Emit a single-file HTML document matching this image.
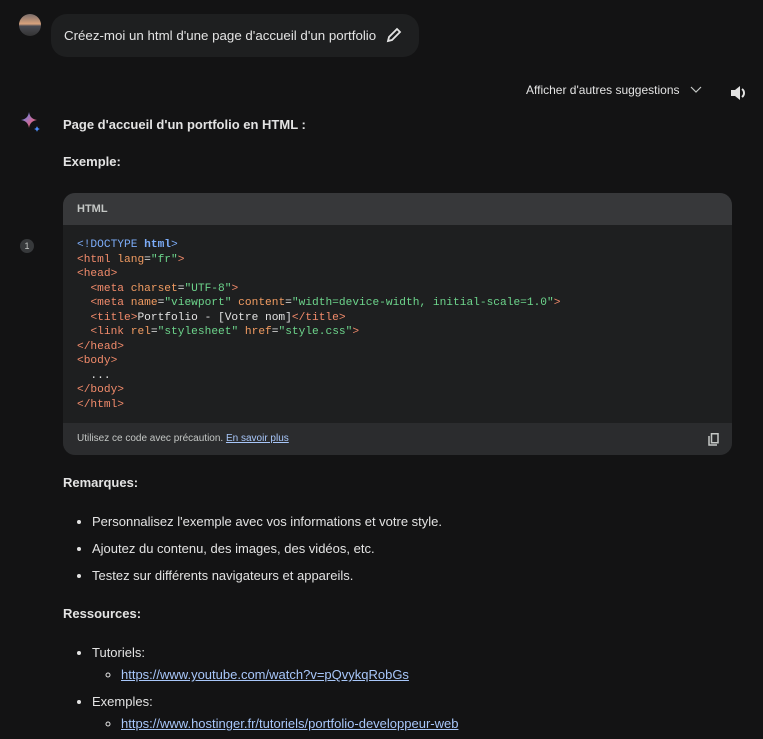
<!DOCTYPE html>
<html><head><style>
body{margin:0;background:#131314;color:#e3e3e3;font-family:"Liberation Sans",sans-serif;font-size:13px;width:763px;height:739px;overflow:hidden;position:relative}
.a{position:absolute}
.code{font-family:"Liberation Mono",monospace;font-size:11.2px;line-height:14.5px;white-space:pre;color:#e3e3e3}
.t{color:#f28b6b}.k{color:#7cacf8}.s{color:#6dd58c}.at{color:#f29c62}
li{margin:0}
a{color:#a8c7fa}
</style></head><body>
<div class="a" style="left:19px;top:14px;width:22px;height:22px;border-radius:50%;background:linear-gradient(#7a6d6a,#d9a27d 45%,#4a4a52 55%,#333)"></div>
<div class="a" style="left:51px;top:14px;width:368px;height:43px;border-radius:16px;background:#1e1f20"></div>
<div class="a" style="left:64px;top:28px;font-size:13.3px">Créez-moi un html d'une page d'accueil d'un portfolio</div>
<svg class="a" style="left:386px;top:27px" width="16" height="16" viewBox="0 0 16 16"><path d="M2 14l1-4 8-8 3 3-8 8z" fill="none" stroke="#e3e3e3" stroke-width="1.8"/></svg>
<div class="a" style="left:526px;top:83px;font-size:12px">Afficher d'autres suggestions</div>
<svg class="a" style="left:690px;top:85px" width="12" height="10"><path d="M1 2l5 5 5-5" fill="none" stroke="#c4c7c5" stroke-width="1.2"/></svg>
<svg class="a" style="left:730px;top:85px" width="18" height="16" viewBox="0 0 18 16"><path d="M1 5h4l5-4v14l-5-4H1z" fill="#e3e3e3"/><path d="M12 4a5 5 0 0 1 0 8" fill="none" stroke="#e3e3e3" stroke-width="2"/></svg>
<svg class="a" style="left:21px;top:112px" width="22" height="22" viewBox="0 0 22 22"><defs><linearGradient id="g" x1="0" y1="0" x2="1" y2="1"><stop offset="0" stop-color="#4b8df8"/><stop offset=".6" stop-color="#c96a9a"/><stop offset="1" stop-color="#e0705c"/></linearGradient></defs><path d="M8 0Q9 7 16 8Q9 9 8 16Q7 9 0 8Q7 7 8 0z" fill="url(#g)"/><path d="M16 14Q16.5 16.5 19 17Q16.5 17.5 16 20Q15.5 17.5 13 17Q15.5 16.5 16 14z" fill="#4b8df8"/></svg>
<div class="a" style="left:63px;top:117px;font-weight:bold">Page d'accueil d'un portfolio en HTML :</div>
<div class="a" style="left:63px;top:154px;font-weight:bold">Exemple:</div>
<div class="a" style="left:20px;top:239px;width:14px;height:14px;border-radius:50%;background:#37393b;color:#c4c7c5;font-size:9px;text-align:center;line-height:14px">1</div>
<div class="a" style="left:63px;top:193px;width:669px;height:262px;border-radius:12px;background:#1e1f20;overflow:hidden">
<div style="height:32px;background:#37383a;font-size:11px;font-weight:bold;color:#c4c7c5;padding-left:14px;line-height:32px">HTML</div>
<div class="code" style="padding:13px 14px 0;height:185px"><span class="k">&lt;!DOCTYPE <b>html</b>&gt;</span>
<span class="t">&lt;html</span> <span class="at">lang</span>=<span class="s">"fr"</span><span class="t">&gt;</span>
<span class="t">&lt;head&gt;</span>
  <span class="t">&lt;meta</span> <span class="at">charset</span>=<span class="s">"UTF-8"</span><span class="t">&gt;</span>
  <span class="t">&lt;meta</span> <span class="at">name</span>=<span class="s">"viewport"</span> <span class="at">content</span>=<span class="s">"width=device-width, initial-scale=1.0"</span><span class="t">&gt;</span>
  <span class="t">&lt;title&gt;</span>Portfolio - [Votre nom]<span class="t">&lt;/title&gt;</span>
  <span class="t">&lt;link</span> <span class="at">rel</span>=<span class="s">"stylesheet"</span> <span class="at">href</span>=<span class="s">"style.css"</span><span class="t">&gt;</span>
<span class="t">&lt;/head&gt;</span>
<span class="t">&lt;body&gt;</span>
  ...
<span class="t">&lt;/body&gt;</span>
<span class="t">&lt;/html&gt;</span></div>
<div style="height:32px;background:#2b2c2e;font-size:10px;color:#c4c7c5;padding-left:14px;line-height:32px;position:relative">Utilisez ce code avec précaution. <a style="text-decoration:underline">En savoir plus</a>
<svg style="position:absolute;right:12px;top:10px" width="12" height="13" viewBox="0 0 12 13"><path d="M1 3v9h8" fill="none" stroke="#c4c7c5" stroke-width="1.5"/><rect x="3.5" y="0.75" width="6.5" height="9" fill="none" stroke="#c4c7c5" stroke-width="1.5"/></svg></div>
</div>
<div class="a" style="left:63px;top:475px;font-weight:bold">Remarques:</div>
<ul class="a" style="left:52px;top:508px;margin:0;padding-left:40px;line-height:27px">
<li>Personnalisez l'exemple avec vos informations et votre style.</li>
<li>Ajoutez du contenu, des images, des vidéos, etc.</li>
<li>Testez sur différents navigateurs et appareils.</li></ul>
<div class="a" style="left:63px;top:606px;font-weight:bold">Ressources:</div>
<ul class="a" style="left:52px;top:642px;margin:0;padding-left:40px;line-height:22px">
<li>Tutoriels:<ul style="list-style:circle;padding-left:29px"><li><a style="text-decoration:underline">https://www.youtube.com/watch?v=pQvykqRobGs</a></li></ul></li>
<li style="margin-top:5px">Exemples:<ul style="list-style:circle;padding-left:29px"><li><a style="text-decoration:underline">https://www.hostinger.fr/tutoriels/portfolio-developpeur-web</a></li></ul></li></ul>
</body></html>
